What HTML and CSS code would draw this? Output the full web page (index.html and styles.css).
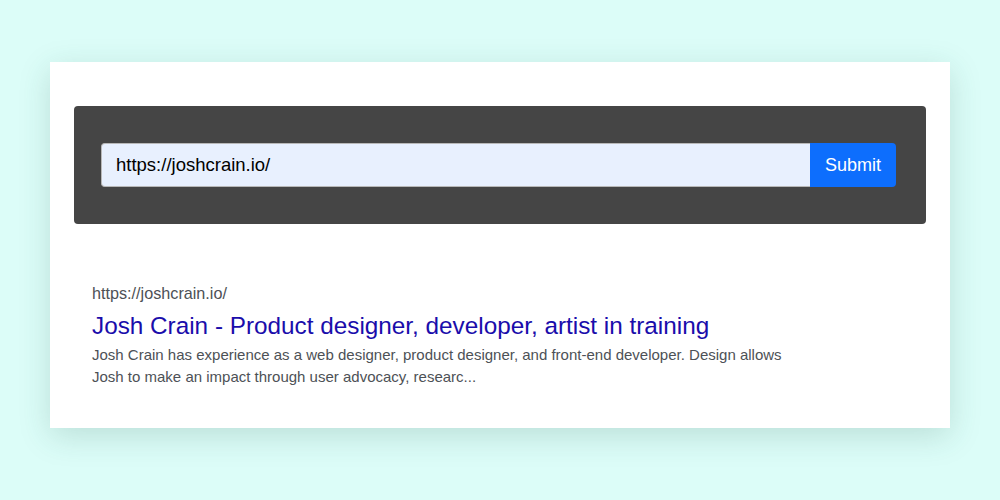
FILE: index.html
```html
<!DOCTYPE html>
<html>
<head>
<meta charset="utf-8">
<link rel="stylesheet" href="styles.css">
</head>
<body>
<div class="card">
  <form class="search">
    <div class="field">
      <input class="input" type="text" value="https://joshcrain.io/">
      <button class="submit" type="button">Submit</button>
    </div>
  </form>
  <div class="result">
    <div class="url">https://joshcrain.io/</div>
    <a class="title" href="#">Josh Crain - Product designer, developer, artist in training</a>
    <p class="desc">Josh Crain has experience as a web designer, product designer, and front-end developer. Design allows Josh to make an impact through user advocacy, researc...</p>
  </div>
</div>
</body>
</html>
```

FILE: styles.css
```css
html, body {
  margin: 0;
  padding: 0;
}
body {
  background: #dcfdf8;
  font-family: "Liberation Sans", Arial, sans-serif;
  width: 1000px;
  height: 500px;
  padding-top: 62px;
  box-sizing: border-box;
}
.card {
  width: 900px;
  height: 366px;
  margin: 0 auto;
  background: #fff;
  box-sizing: border-box;
  padding: 44px 24px 0 24px;
  box-shadow: 0 8px 30px rgba(40, 90, 80, 0.18);
}
.search {
  background: #454545;
  border-radius: 4px;
  padding: 37px 30px 37px 27px;
  margin: 0;
}
.field {
  display: flex;
  height: 44px;
}
.input {
  flex: 1;
  height: 44px;
  box-sizing: border-box;
  background: #e8f0fe;
  border: 1px solid #b8b8b8;
  border-right: none;
  border-radius: 4px 0 0 4px;
  padding: 0 14px;
  font-family: "Liberation Sans", Arial, sans-serif;
  font-size: 18.5px;
  color: #000;
  outline: none;
}
.submit {
  width: 86px;
  height: 44px;
  border: none;
  background: #0d6efd;
  color: #fff;
  border-radius: 0 4px 4px 0;
  font-family: "Liberation Sans", Arial, sans-serif;
  font-size: 18px;
  padding: 0;
}
.result {
  padding: 59px 18px 0 18px;
  max-width: 700px;
}
.url {
  font-size: 16.2px;
  line-height: 20px;
  color: #4d5156;
}
.title {
  display: block;
  margin-top: 9px;
  font-size: 24.3px;
  line-height: 28px;
  color: #1a0dab;
  text-decoration: none;
}
.desc {
  margin: 4px 0 0 0;
  font-size: 15px;
  line-height: 22px;
  color: #4d5156;
}
```
